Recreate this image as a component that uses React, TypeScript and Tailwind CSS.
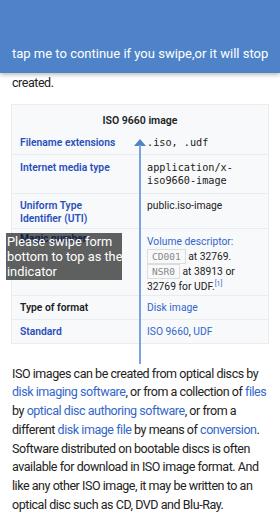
import React from "react";

const L = "text-[#3366cc]";

export default function App() {
  return (
    <div className="relative w-[280px] h-[512px] overflow-hidden bg-white" style={{ fontFamily: "Roboto, 'Liberation Sans', sans-serif" }}>
      <div className="relative z-10 h-[73px] bg-[#4e83c9] shadow-[0_2px_4px_rgba(0,0,0,0.25)] flex items-end pb-[10px] pl-[12px]">
        <span className="text-white text-[13px] leading-[18px] whitespace-nowrap">tap me to continue if you swipe,or it will stop</span>
      </div>
      <div className="px-[12px] text-[12.5px] tracking-[-0.45px] leading-[18.7px] text-[#222]">
        <p className="pt-[1px]">created.</p>
      </div>
      <div className="mx-[11px] mt-[11px] border border-[#eaecf0] bg-[#f8f9fa] text-[10.3px] leading-[13px] text-[#202122]">
        <div className="h-[27px] flex items-center justify-center font-semibold text-[10.5px] pt-[4px]">ISO 9660 image</div>
        <div className="grid grid-cols-[127px_1fr] h-[22px]">
          <div className="pl-[8px] pt-[4px] font-semibold text-[#2a4fbd]">Filename extensions</div>
          <div className="pl-[8px] pt-[4px] text-[10.2px]" style={{ fontFamily: "'DejaVu Sans Mono', monospace" }}>.iso, .udf</div>
        </div>
        <div className="grid grid-cols-[127px_1fr] h-[39px] border-t border-[#eaecf0]">
          <div className="pl-[8px] pt-[6px] font-semibold text-[#2a4fbd]">Internet media type</div>
          <div className="pl-[8px] pt-[6px] text-[10.2px] leading-[13px]" style={{ fontFamily: "'DejaVu Sans Mono', monospace" }}>application/x-<br />iso9660-image</div>
        </div>
        <div className="grid grid-cols-[127px_1fr] h-[35px] border-t border-[#eaecf0]">
          <div className="pl-[8px] pt-[5px] font-semibold text-[#2a4fbd]">Uniform Type<br />Identifier (UTI)</div>
          <div className="pl-[8px] pt-[5px]">public.iso-image</div>
        </div>
        <div className="grid grid-cols-[127px_1fr] h-[67px] border-t border-[#eaecf0]">
          <div className="pl-[8px] pt-[3px] font-semibold text-[#2a4fbd]">Magic number</div>
          <div className="pl-[8px] pt-[5px] leading-[15px]">
            <span className={L}>Volume descriptor:</span><br />
            <span className="inline-block border border-[#dddddd] bg-[#f8f9fa] px-[4px] text-[9.5px] leading-[13px] text-[#888]" style={{ fontFamily: "'DejaVu Sans Mono', monospace" }}>CD001</span> at 32769.<br />
            <span className="inline-block border border-[#dddddd] bg-[#f8f9fa] px-[4px] text-[9.5px] leading-[13px] text-[#888]" style={{ fontFamily: "'DejaVu Sans Mono', monospace" }}>NSR0</span> at 38913 or<br />
            32769 for UDF.<sup className={`${L} text-[7px]`}>[1]</sup>
          </div>
        </div>
        <div className="grid grid-cols-[127px_1fr] h-[24px] border-t border-[#eaecf0]">
          <div className="pl-[8px] pt-[5px] font-semibold">Type of format</div>
          <div className={`pl-[8px] pt-[5px] ${L}`}>Disk image</div>
        </div>
        <div className="grid grid-cols-[127px_1fr] h-[24px] border-t border-[#eaecf0]">
          <div className="pl-[8px] pt-[5px] font-semibold text-[#2a4fbd]">Standard</div>
          <div className="pl-[8px] pt-[5px]"><span className={L}>ISO 9660</span>, <span className={L}>UDF</span></div>
        </div>
      </div>
      <div className="px-[12px] pt-[21px] text-[12.5px] tracking-[-0.45px] leading-[18.7px] text-[#222]">
        <p>
          ISO images can be created from optical discs by <span className={L}>disk imaging software</span>, or from a collection of <span className={L}>files</span> by <span className={L}>optical disc authoring software</span>, or from a different <span className={L}>disk image file</span> by means of <span className={L}>conversion</span>. Software distributed on bootable discs is often available for download in ISO image format. And like any other ISO image, it may be written to an optical disc such as CD, DVD and Blu-Ray.
        </p>
      </div>

      <svg className="absolute left-[134px] top-[139px]" width="12" height="225" viewBox="0 0 12 225">
        <polygon points="6,0 0,7 12,7" fill="#4e83c9" />
        <rect x="5" y="6" width="2" height="219" fill="#7da3dc" />
      </svg>

      <div className="absolute left-[6px] top-[233px] w-[116px] h-[47px] bg-[rgba(0,0,0,0.62)] text-white text-[12.8px] leading-[15px] pl-[1px] pt-[1px] whitespace-nowrap">
        Please swipe form<br />bottom to top as the<br />indicator
      </div>
    </div>
  );
}
